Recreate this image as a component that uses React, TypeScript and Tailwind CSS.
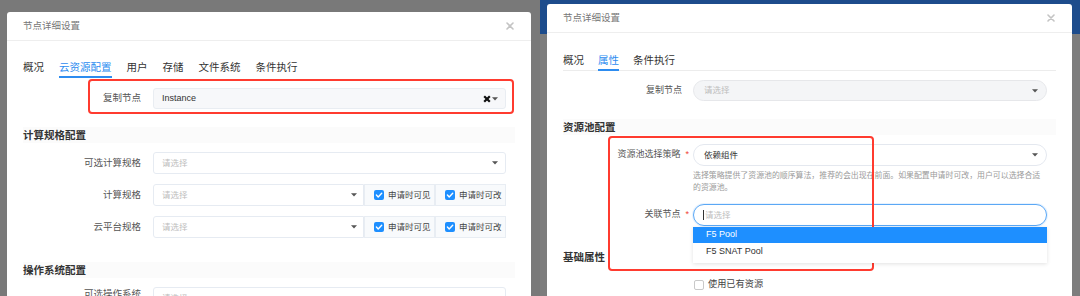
import React from "react";

const Caret = () => (
  <svg width="6" height="4" viewBox="0 0 6 4" className="shrink-0">
    <path d="M0 0.3h6L3 3.6z" fill="#555" />
  </svg>
);

const CloseX = () => (
  <svg width="8" height="8" viewBox="0 0 8 8">
    <path d="M1 1l6 6M7 1L1 7" stroke="#c4c4c4" strokeWidth="1.6" strokeLinecap="round" />
  </svg>
);

const CheckBox = ({ checked }: { checked?: boolean }) =>
  checked ? (
    <span className="flex w-[10px] h-[10px] items-center justify-center rounded-[2px] bg-[#1e8fff] shrink-0">
      <svg width="8" height="8" viewBox="0 0 8 8">
        <path d="M1.4 4.1l1.8 1.8L6.7 2.3" stroke="#fff" strokeWidth="1.4" fill="none" strokeLinecap="round" strokeLinejoin="round" />
      </svg>
    </span>
  ) : (
    <span className="block w-[10px] h-[10px] rounded-[2px] border border-[#c9c9c9] bg-white shrink-0" />
  );

const Header = ({ pad }: { pad: string }) => (
  <div className={`flex h-[29px] items-center justify-between border-b border-[#eeeeee] pl-[16px] pr-[17px] ${pad}`}>
    <span className="text-[9.5px] text-[#777]">节点详细设置</span>
    <CloseX />
  </div>
);

function Tabs({ items, active, gap }: { items: string[]; active: string; gap: string }) {
  return (
    <div className={`flex ${gap} text-[10.5px] leading-[14px] text-[#333]`}>
      {items.map((t) => (
        <div
          key={t}
          className={
            t === active
              ? "pb-[2px] border-b-2 border-[#2d8cf0] text-[#2d8cf0]"
              : "pb-[2px] border-b-2 border-transparent"
          }
        >
          {t}
        </div>
      ))}
    </div>
  );
}

function LeftRow({ label, children, className = "" }: { label: string; children: React.ReactNode; className?: string }) {
  return (
    <div className={`flex items-center ${className}`}>
      <div className="w-[118px] text-right text-[9.5px] text-[#555]">{label}</div>
      <div className="ml-[12px] flex">{children}</div>
    </div>
  );
}

const Placeholder = () => <span className="text-[8.5px] text-[#bdbdbd]">请选择</span>;

function CheckGroup({ label }: { label: string }) {
  return (
    <div className="flex h-[22px] w-[71px] items-center gap-[4px] border border-[#e8edf3] bg-[#f8fafc] pl-[9px] text-[8.5px] text-[#444]">
      <CheckBox checked />
      {label}
    </div>
  );
}

function LeftModal() {
  return (
    <div className="w-[524px] h-[284px] bg-white rounded-t-[3px] overflow-hidden">
      <Header pad="" />
      <div className="px-[16px]">
        <div className="pt-[19px]">
          <Tabs items={["概况", "云资源配置", "用户", "存储", "文件系统", "条件执行"]} active="云资源配置" gap="gap-[15px]" />
        </div>
        <LeftRow label="复制节点" className="mt-[10px]">
          <div className="flex h-[21px] w-[353px] items-center justify-between rounded-[3px] border border-[#e9edf2] bg-[#f7f8fa] pl-[8px] pr-[7px]">
            <span className="text-[9px] text-[#333]">Instance</span>
            <span className="flex items-center gap-[1px]">
              <svg width="8" height="8" viewBox="0 0 8 8">
                <path d="M1.2 1.2l5.6 5.6M6.8 1.2L1.2 6.8" stroke="#111" strokeWidth="2.2" />
              </svg>
              <Caret />
            </span>
          </div>
        </LeftRow>
        <div className="mt-[18px] bg-[#fbfbfb] text-[10.5px] leading-[16px] font-bold text-[#333]">计算规格配置</div>
        <LeftRow label="可选计算规格" className="mt-[9px]">
          <div className="flex h-[22px] w-[353px] items-center justify-between rounded-[3px] border border-[#e6ebf2] bg-white pl-[8px] pr-[7px]">
            <Placeholder />
            <Caret />
          </div>
        </LeftRow>
        <LeftRow label="计算规格" className="mt-[10px]">
          <div className="flex h-[22px] w-[211px] items-center justify-between rounded-l-[3px] border border-[#e6ebf2] bg-white pl-[8px] pr-[6px]">
            <Placeholder />
            <Caret />
          </div>
          <CheckGroup label="申请时可见" />
          <CheckGroup label="申请时可改" />
        </LeftRow>
        <LeftRow label="云平台规格" className="mt-[10px]">
          <div className="flex h-[22px] w-[211px] items-center justify-between rounded-l-[3px] border border-[#e6ebf2] bg-white pl-[8px] pr-[6px]">
            <Placeholder />
            <Caret />
          </div>
          <CheckGroup label="申请时可见" />
          <CheckGroup label="申请时可改" />
        </LeftRow>
        <div className="mt-[24px] bg-[#fbfbfb] text-[10.5px] leading-[16px] font-bold text-[#333]">操作系统配置</div>
        <LeftRow label="可选操作系统" className="mt-[9px] items-start">
          <div className="flex h-[22px] w-[353px] items-center rounded-[3px] border border-[#e6ebf2] bg-white pl-[8px]">
            <Placeholder />
          </div>
        </LeftRow>
      </div>
    </div>
  );
}

function RightRow({ label, required, children, className = "" }: { label: string; required?: boolean; children: React.ReactNode; className?: string }) {
  return (
    <div className={`flex items-center ${className}`}>
      <div className="flex w-[130px] justify-end text-[9px] text-[#555]">
        <span>{label}</span>
        {required ? <span className="ml-[5px] mr-[4px] text-[#f04134]">*</span> : <span className="mr-[11px]" />}
      </div>
      <div className="relative flex">{children}</div>
    </div>
  );
}

function RightModal() {
  return (
    <div className="w-[525px] h-[292px] bg-white rounded-t-[3px] overflow-hidden">
      <Header pad="" />
      <div className="pl-[16px] pr-[16px]">
        <div className="pt-[20px] border-b border-[#ececec]">
          <div className="-mb-px">
            <Tabs items={["概况", "属性", "条件执行"]} active="属性" gap="gap-[14px]" />
          </div>
        </div>
        <RightRow label="复制节点" className="mt-[9px]">
          <div className="flex h-[21px] w-[354px] items-center justify-between rounded-full border border-[#e6e7ea] bg-[#f4f5f7] pl-[10px] pr-[8px]">
            <Placeholder />
            <Caret />
          </div>
        </RightRow>
        <div className="mt-[18px] bg-[#fbfbfb] text-[10.5px] leading-[16px] font-bold text-[#333]">资源池配置</div>
        <RightRow label="资源池选择策略" required className="mt-[9px]">
          <div className="flex h-[22px] w-[354px] items-center justify-between rounded-full border border-[#e4e8ef] bg-white pl-[10px] pr-[8px]">
            <span className="text-[8.5px] text-[#333]">依赖组件</span>
            <Caret />
          </div>
        </RightRow>
        <div className="ml-[130px] mt-[4px] whitespace-nowrap text-[7.9px] leading-[12px] text-[#9a9a9a]">
          选择策略提供了资源池的顺序算法，推荐的会出现在前面。如果配置申请时可改，用户可以选择合适
          <br />
          的资源池。
        </div>
        <RightRow label="关联节点" required className="mt-[10px]">
          <div className="flex h-[22px] w-[354px] items-center rounded-full border border-[#5ba8f5] bg-white pl-[9px] shadow-[0_0_0_1px_rgba(91,168,245,0.15)]">
            <span className="mr-[1px] h-[10px] w-px bg-[#333]" />
            <Placeholder />
          </div>
          <div className="absolute left-0 top-[23px] z-10 w-[354px] bg-white pb-[3px] text-[9px] shadow-[0_1px_4px_rgba(0,0,0,0.12)]">
            <div className="flex h-[16px] items-center bg-[#1e8fff] pl-[13px] text-white">F5 Pool</div>
            <div className="flex h-[17px] items-center pl-[13px] text-[#333]">F5 SNAT Pool</div>
          </div>
        </RightRow>
        <div className="mt-[23px] text-[10.5px] leading-[16px] font-bold text-[#333]">基础属性</div>
        <div className="ml-[131px] mt-[13px] flex items-center gap-[4px] text-[9.2px] text-[#444]">
          <CheckBox />
          使用已有资源
        </div>
      </div>
    </div>
  );
}

export default function App() {
  return (
    <div className="relative flex w-[1080px] h-[296px] overflow-hidden font-['Liberation_Sans','Noto_Sans_CJK_SC',sans-serif]">
      <div className="w-[540px] h-full shrink-0 bg-[#797979] pl-[7px] pt-[12px]">
        <LeftModal />
      </div>
      <div className="w-[540px] h-full shrink-0 bg-[linear-gradient(to_bottom,#1d4c8c_0,#1d4c8c_34px,#7d7d7d_34px)] pl-[7px] pt-[4px]">
        <RightModal />
      </div>

      {/* red annotation boxes */}
      <div className="pointer-events-none absolute left-[88px] top-[79px] h-[35px] w-[426px] rounded-[4px] border-2 border-[#ff3b2f]" />
      <div className="pointer-events-none absolute left-[608px] top-[136px] h-[135px] w-[266px] rounded-[4px] border-2 border-[#ff3b2f]" />
    </div>
  );
}
